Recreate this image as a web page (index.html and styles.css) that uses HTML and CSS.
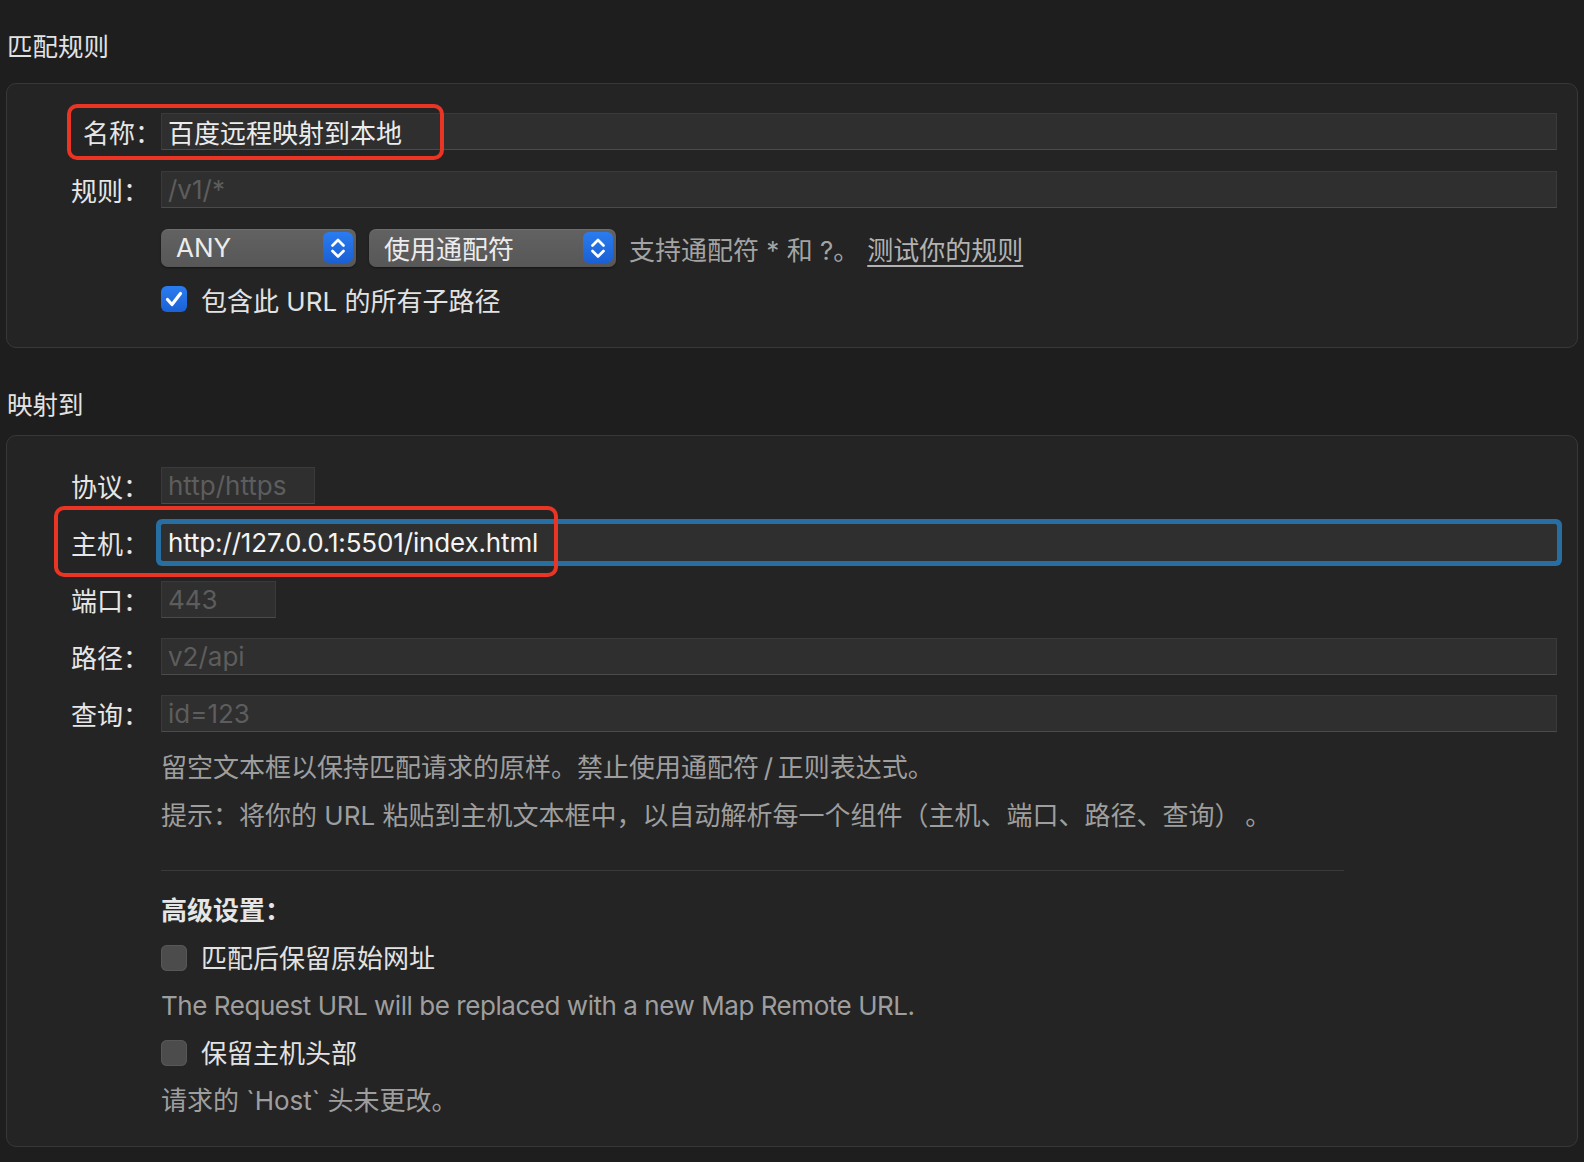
FILE: index.html
```html
<!DOCTYPE html>
<html>
<head>
  <meta charset="utf-8">
  <meta name="viewport" content="width=device-width">
  <title>Map Remote</title>

  <link rel="stylesheet" href="styles.css">

</head>
<body>
  <div id="content">

    <h2 class="sectionTitle firstTitle">匹配规则</h2>
    <div class="group matchGroup">
      <div class="row">
        <span class="label nameLabel">名称：</span>
        <div class="field"><span class="value">百度远程映射到本地</span></div>
      </div>
      <div class="row">
        <span class="label">规则：</span>
        <div class="field"><span class="placeholder">/v1/*</span></div>
      </div>
      <div class="row">
        <span class="label"></span>
        <div class="controls">
          <div class="popup popupMethod">
            <span>ANY</span>
            <span class="popupArrow">
              <svg width="30" height="31" viewBox="0 0 30 31"><path d="M9.5 13.5 L15 8 L20.5 13.5 M9.5 19 L15 24.5 L20.5 19" fill="none" stroke="#fff" stroke-width="2.7" stroke-linecap="round" stroke-linejoin="round"/></svg>
            </span>
          </div>
          <div class="popup popupMode">
            <span>使用通配符</span>
            <span class="popupArrow">
              <svg width="30" height="31" viewBox="0 0 30 31"><path d="M9.5 13.5 L15 8 L20.5 13.5 M9.5 19 L15 24.5 L20.5 19" fill="none" stroke="#fff" stroke-width="2.7" stroke-linecap="round" stroke-linejoin="round"/></svg>
            </span>
          </div>
          <span class="hint">支持通配符 * 和 ?。</span>
          <span class="testLink">测试你的规则</span>
        </div>
      </div>
      <div class="row">
        <span class="label"></span>
        <div class="option">
          <span class="check">
            <svg width="26" height="26" viewBox="0 0 26 26"><path d="M6.5 13.5 L11 18.5 L19.5 7.5" fill="none" stroke="#fff" stroke-width="3.2" stroke-linecap="round" stroke-linejoin="round"/></svg>
          </span>
          <span>包含此 URL 的所有子路径</span>
        </div>
      </div>

      <div class="mark markName"></div>
    </div>

    <h2 class="sectionTitle secondTitle">映射到</h2>
    <div class="group mapGroup">
      <div class="row">
        <span class="label">协议：</span>
        <div class="field fieldProtocol"><span class="placeholder">http/https</span></div>
      </div>
      <div class="row">
        <span class="label">主机：</span>
        <div class="field fieldFocus"><span class="value">http://127.0.0.1:5501/index.html</span></div>
      </div>
      <div class="row">
        <span class="label">端口：</span>
        <div class="field fieldPort"><span class="placeholder">443</span></div>
      </div>
      <div class="row">
        <span class="label">路径：</span>
        <div class="field"><span class="placeholder">v2/api</span></div>
      </div>
      <div class="row">
        <span class="label">查询：</span>
        <div class="field"><span class="placeholder">id=123</span></div>
      </div>

      <div class="notes">
        <p>留空文本框以保持匹配请求的原样。禁止使用通配符&thinsp;/&thinsp;正则表达式。</p>
        <p>提示：将你的 URL 粘贴到主机文本框中，以自动解析每一个组件（主机、端口、路径、查询）&thinsp;。</p>
      </div>

      <div class="divider"></div>

      <div class="advanced">
        <p class="advTitle">高级设置：</p>
        <div class="option">
          <span class="check off"></span>
          <span>匹配后保留原始网址</span>
        </div>
        <p class="note latin">The Request URL will be replaced with a new Map Remote URL.</p>
        <div class="option">
          <span class="check off"></span>
          <span>保留主机头部</span>
        </div>
        <p class="note">请求的 `Host` 头未更改。</p>
      </div>

      <div class="mark markHost"></div>
    </div>

  </div>
</body>
</html>
```

FILE: styles.css
```css
* {
  box-sizing: border-box;
}

body {
  margin: 0;
  background: #1e1e1e;
  color: #e2e2e2;
  font-family: "Inter", "Noto Sans CJK SC", sans-serif;
  font-size: 26px;
}

#content {
  padding: 0 6px;
  width: 1584px;
}

p {
  margin: 0;
}

.sectionTitle {
  margin: 0;
  padding-left: 1px;
  font-size: 25.5px;
  font-weight: normal;
  line-height: 26px;
  color: #e2e2e2;
}

.firstTitle {
  padding-top: 34px;
  margin-bottom: 23px;
}

.secondTitle {
  margin-top: 44px;
  margin-bottom: 17px;
}

.group {
  position: relative;
  width: 1572px;
  background: #242424;
  border: 1px solid #383838;
  border-radius: 10px;
  padding-right: 20px;
}

.matchGroup {
  padding-top: 29px;
  padding-bottom: 35px;
}

.mapGroup {
  padding-top: 31px;
  padding-bottom: 21px;
}

.row {
  display: grid;
  grid-template-columns: 154px 1fr;
  align-items: center;
  margin-bottom: 21px;
}

.matchGroup .row:nth-child(3) {
  margin-bottom: 19px;
}

.matchGroup .row:nth-child(4) {
  margin-bottom: 0;
}

.mapGroup .row {
  margin-bottom: 20px;
}

.mapGroup .row:nth-child(5) {
  margin-bottom: 0;
}

.label {
  text-align: right;
  padding-right: 12px;
  margin-left: -14px;
  white-space: nowrap;
  color: #e6e6e6;
}

.nameLabel {
  padding-right: 0;
}

.field {
  height: 37px;
  display: flex;
  align-items: center;
  padding: 0 6px;
  background: #2f2f2f;
  border: 1px solid #3a3a3a;
  border-bottom-color: #4b4b4b;
  white-space: nowrap;
  overflow: hidden;
}

.value {
  color: #ececec;
}

.placeholder {
  color: #5d5d5d;
}

.fieldProtocol {
  width: 154px;
}

.fieldPort {
  width: 115px;
}

.fieldFocus {
  border-color: #2f2f2f;
  border-radius: 2px;
  box-shadow: 0 0 0 5px #276ea3;
  overflow: visible;
}

.fieldFocus .value {
  color: #f4f4f4;
  letter-spacing: -0.15px;
}

.controls {
  display: flex;
  align-items: center;
}

.popup {
  height: 38px;
  display: flex;
  align-items: center;
  justify-content: space-between;
  padding: 3px 3px 4px 15px;
  border-radius: 7px;
  background: linear-gradient(#626262, #575757);
  box-shadow: inset 0 1px 0 rgba(255, 255, 255, 0.08), 0 1px 2px rgba(0, 0, 0, 0.45);
  color: #ececec;
}

.popupMethod {
  width: 195px;
  margin-right: 13px;
}

.popupMode {
  width: 247px;
  margin-right: 13px;
}

.popupArrow {
  display: block;
  width: 30px;
  height: 31px;
  border-radius: 6px;
  background: linear-gradient(#2a7cf0, #1a60d4);
}

.popupArrow svg {
  display: block;
}

.hint {
  color: #a3a3a3;
  margin-right: 8px;
}

.testLink {
  color: #b3b3b3;
  text-decoration: underline;
  text-underline-offset: 5px;
  text-decoration-thickness: 2px;
}

.option {
  display: flex;
  align-items: center;
  height: 26px;
}

.check {
  display: block;
  width: 26px;
  height: 26px;
  margin-right: 14px;
  border-radius: 6px;
  background: linear-gradient(#2a7cf0, #1a62d6);
}

.check svg {
  display: block;
}

.check.off {
  background: #4c4c4c;
  box-shadow: inset 0 0 0 1px #575757;
}

.notes {
  margin-top: 12px;
  margin-left: 154px;
  line-height: 47.5px;
  color: #9e9e9e;
}

.divider {
  margin-top: 31px;
  margin-left: 154px;
  width: 1183px;
  height: 1px;
  background: #3a3a3a;
}

.advanced {
  margin-top: 16px;
  margin-left: 154px;
  line-height: 47.5px;
}

.advanced .option {
  height: 47.5px;
}

.advTitle {
  font-weight: bold;
  color: #e6e6e6;
}

.note {
  color: #9e9e9e;
}

.latin {
  letter-spacing: -0.45px;
}

.mark {
  position: absolute;
  border: 4px solid #ea3424;
  border-radius: 10px;
}

.markName {
  left: 60px;
  top: 20px;
  width: 377px;
  height: 56px;
}

.markHost {
  left: 47px;
  top: 70px;
  width: 504px;
  height: 71px;
}
```
